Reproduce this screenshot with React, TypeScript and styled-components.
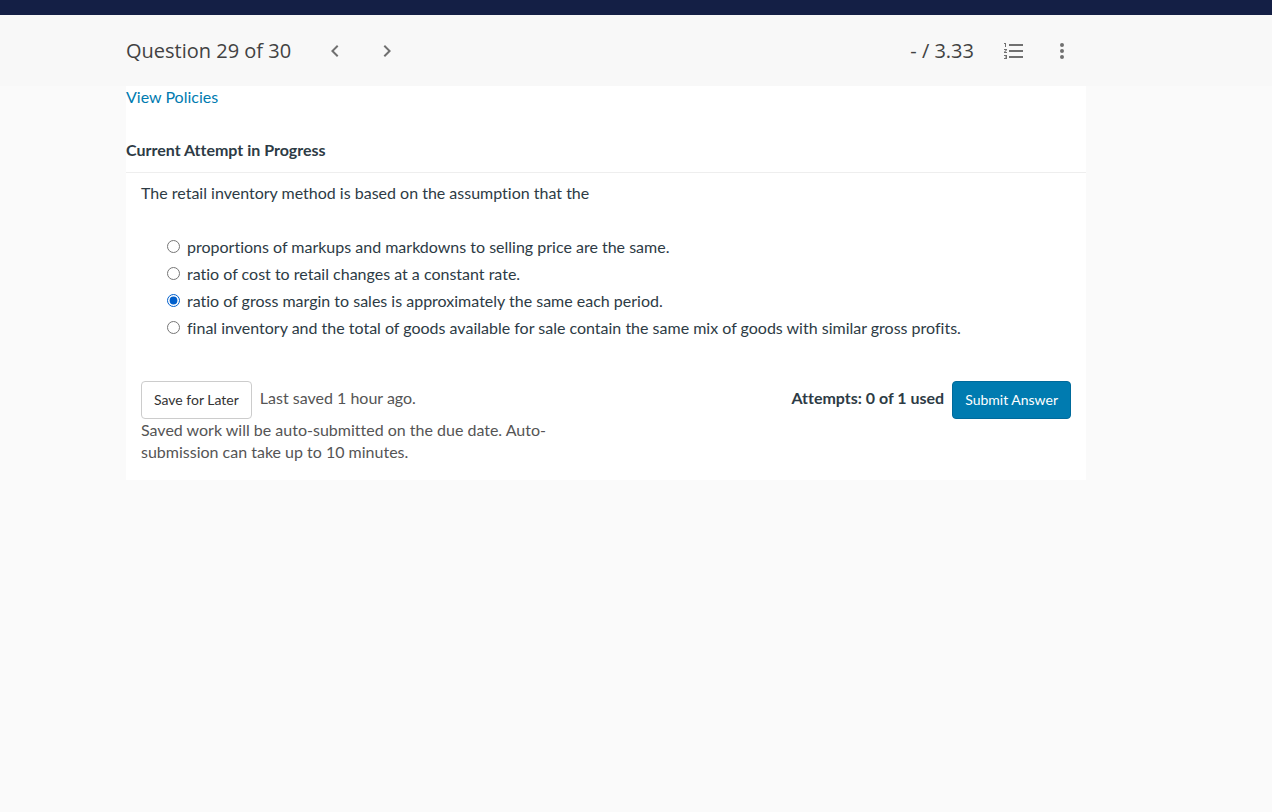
import React, { useState } from "react";
import styled, { createGlobalStyle } from "styled-components";

const GlobalStyle = createGlobalStyle`
  * { box-sizing: border-box; }
  body {
    margin: 0;
    background: #fafafa;
    color: #2d3b45;
    font-family: Lato, "Liberation Sans", sans-serif;
    font-size: 16px;
    font-variant-ligatures: none;
    line-height: 22px;
  }
`;

const TopStrip = styled.div`
  height: 15px;
  background: #141f45;
`;

const Header = styled.header`
  height: 71px;
  padding: 0 186px 0 126px;
  background: #f8f8f8;
`;

const HeaderInner = styled.div`
  display: flex;
  align-items: center;
  height: 100%;
  max-width: 960px;
  color: #424242;
  font-family: "Open Sans", sans-serif;
`;

const Title = styled.h1`
  margin: 0 24px 0 0;
  font-size: 20px;
  font-weight: 400;
  line-height: 28px;
`;

const IconButton = styled.button`
  display: flex;
  align-items: center;
  justify-content: center;
  width: 40px;
  height: 40px;
  margin: 0 12px 0 0;
  padding: 0;
  border: 0;
  background: none;
  color: #707070;
  cursor: pointer;
`;

const HeaderEnd = styled.div`
  display: flex;
  align-items: center;
  margin-left: auto;
  padding-right: 4px;

  ${IconButton} {
    margin: 0 0 0 8px;
  }
`;

const Score = styled.span`
  margin-right: 12px;
  font-size: 20px;
  line-height: 28px;
`;

const Page = styled.main`
  padding: 0 186px 0 126px;
`;

const Panel = styled.div`
  max-width: 960px;
  background: #fff;
`;

const PolicyLink = styled.a`
  display: inline-block;
  color: #007bb0;
  text-decoration: none;
`;

const AttemptHeading = styled.h2`
  margin: 0;
  padding: 32px 0 12px;
  border-bottom: 1px solid #eee;
  font-size: 16px;
  font-weight: 700;
  line-height: 20px;
`;

const Question = styled.form`
  padding: 9px 15px 17px;
`;

const Prompt = styled.p`
  margin: 0 0 32px;
`;

const Choices = styled.fieldset`
  display: grid;
  gap: 5px;
  margin: 0 0 42px;
  padding: 0 0 0 26px;
  border: 0;
`;

const Choice = styled.label`
  display: flex;
  align-items: flex-start;
  gap: 7px;
`;

const Radio = styled.input`
  flex: none;
  width: 13px;
  height: 13px;
  margin: 4px 0 0;
  accent-color: #005fcc;
`;

const Actions = styled.div`
  display: flex;
  justify-content: space-between;
  color: #555;
`;

const ActionGroup = styled.div`
  display: flex;
  gap: 8px;
  line-height: 34px;
`;

const Button = styled.button<{ $primary?: boolean }>`
  height: 38px;
  padding: 0 12px 2px;
  border: 1px solid ${(p) => (p.$primary ? "#006a9b" : "#ccc")};
  border-radius: 4px;
  background: ${(p) => (p.$primary ? "#007bb0" : "#fff")};
  color: ${(p) => (p.$primary ? "#fff" : "#333")};
  font-family: inherit;
  font-size: 14px;
  cursor: pointer;
`;

const Attempts = styled.strong`
  color: #2d3b45;
`;

const Note = styled.p`
  max-width: 420px;
  margin: 0;
  color: #555;
`;

const choices = [
  "proportions of markups and markdowns to selling price are the same.",
  "ratio of cost to retail changes at a constant rate.",
  "ratio of gross margin to sales is approximately the same each period.",
  "final inventory and the total of goods available for sale contain the same mix of goods with similar gross profits.",
];

const icons = {
  previous: "M15.41 7.41L14 6l-6 6 6 6 1.410-1.410L10.830 12z",
  next: "M10 6L8.590 7.410 13.170 12l-4.580 4.590L10 18l6-6z",
  list: "M2 17h2v.5H3v1h1v.5H2v1h3v-4H2v1zm1-9h1V4H2v1h1v3zm-1 3h1.800L2 13.100v.9h3v-1H3.200L5 10.900V10H2v1zm5-6v2h14V5H7zm0 14h14v-2H7v2zm0-6h14v-2H7v2z",
  more: "M12 8a2 2 0 1 0 0-4 2 2 0 0 0 0 4zm0 2a2 2 0 1 0 0 4 2 2 0 0 0 0-4zm0 6a2 2 0 1 0 0 4 2 2 0 0 0 0-4z",
};

const Icon = ({ name }: { name: keyof typeof icons }) => (
  <svg width="24" height="24" viewBox="0 0 24 24" fill="currentColor" aria-hidden="true">
    <path d={icons[name]} />
  </svg>
);

export default function App() {
  const [selected, setSelected] = useState(2);
  return (
    <>
      <GlobalStyle />
      <TopStrip />
      <Header>
        <HeaderInner>
          <Title>Question 29 of 30</Title>
          <IconButton aria-label="Previous question"><Icon name="previous" /></IconButton>
          <IconButton aria-label="Next question"><Icon name="next" /></IconButton>
          <HeaderEnd>
            <Score>- / 3.33</Score>
            <IconButton aria-label="Question list"><Icon name="list" /></IconButton>
            <IconButton aria-label="More options"><Icon name="more" /></IconButton>
          </HeaderEnd>
        </HeaderInner>
      </Header>
      <Page>
        <Panel>
          <PolicyLink href="#policies">View Policies</PolicyLink>
          <AttemptHeading>Current Attempt in Progress</AttemptHeading>
          <Question onSubmit={(e) => e.preventDefault()}>
            <Prompt id="prompt">The retail inventory method is based on the assumption that the</Prompt>
            <Choices aria-labelledby="prompt">
              {choices.map((text, i) => (
                <Choice key={text}>
                  <Radio type="radio" name="answer" checked={selected === i} onChange={() => setSelected(i)} />
                  <span>{text}</span>
                </Choice>
              ))}
            </Choices>
            <Actions>
              <ActionGroup>
                <Button type="button">Save for Later</Button>
                <span>Last saved 1 hour ago.</span>
              </ActionGroup>
              <ActionGroup>
                <Attempts>Attempts: 0 of 1 used</Attempts>
                <Button type="submit" $primary>Submit Answer</Button>
              </ActionGroup>
            </Actions>
            <Note>Saved work will be auto-submitted on the due date. Auto-submission can take up to 10 minutes.</Note>
          </Question>
        </Panel>
      </Page>
    </>
  );
}
